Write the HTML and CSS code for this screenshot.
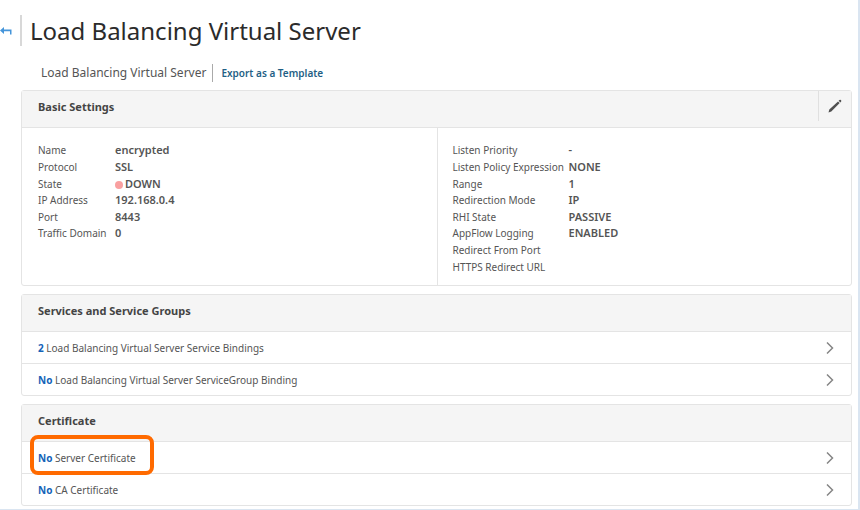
FILE: index.html
```html
<!DOCTYPE html>
<html lang="en">
<head>
<meta charset="utf-8">
<title>Load Balancing Virtual Server</title>
<link rel="stylesheet" href="styles.css">
</head>
<body>
<main class="page">
  <header class="page-header">
    <a class="back" href="#" aria-label="Back">
      <svg width="12" height="8" viewBox="0 0 12 8" aria-hidden="true"><path d="M0 3.500 4 0v2.500h7.500v5h-1.500V4.300H4V7z" fill="#4595da"/></svg>
    </a>
    <h1 class="title">Load Balancing Virtual Server</h1>
  </header>
  <div class="content">
    <nav class="subnav">
      <span class="subnav-name">Load Balancing Virtual Server</span>
      <a class="export" href="#">Export as a Template</a>
    </nav>

    <section class="panel">
      <header class="panel-header">
        <h2 class="panel-title">Basic Settings</h2>
        <button class="edit" type="button" aria-label="Edit">
          <svg width="14" height="14" viewBox="0 0 14 14" aria-hidden="true"><path d="M0.500 13.500 1.300 10.600 10 2.400 11.700 4.100 3.300 12.600zM10.600 1.800 11.500 0.900Q12.200 0.400 12.900 1 13.600 1.700 13.200 2.500L12.300 3.500z" fill="#505050"/></svg>
        </button>
      </header>
      <div class="settings">
        <dl class="details">
          <dt>Name</dt><dd>encrypted</dd>
          <dt>Protocol</dt><dd>SSL</dd>
          <dt>State</dt><dd><span class="dot"></span>DOWN</dd>
          <dt>IP Address</dt><dd>192.168.0.4</dd>
          <dt>Port</dt><dd>8443</dd>
          <dt>Traffic Domain</dt><dd>0</dd>
        </dl>
        <dl class="details details-wide">
          <dt>Listen Priority</dt><dd>-</dd>
          <dt>Listen Policy Expression</dt><dd>NONE</dd>
          <dt>Range</dt><dd>1</dd>
          <dt>Redirection Mode</dt><dd>IP</dd>
          <dt>RHI State</dt><dd>PASSIVE</dd>
          <dt>AppFlow Logging</dt><dd>ENABLED</dd>
          <dt>Redirect From Port</dt><dd></dd>
          <dt>HTTPS Redirect URL</dt><dd></dd>
        </dl>
      </div>
    </section>

    <section class="panel">
      <header class="panel-header"><h2 class="panel-title">Services and Service Groups</h2></header>
      <a class="row" href="#"><span><b>2</b> Load Balancing Virtual Server Service Bindings</span>
        <svg class="chevron" width="8" height="12" viewBox="0 0 8 12" aria-hidden="true"><path d="M1 0.500 6.500 6 1 11.500"/></svg></a>
      <a class="row" href="#"><span><b>No</b> Load Balancing Virtual Server ServiceGroup Binding</span>
        <svg class="chevron" width="8" height="12" viewBox="0 0 8 12" aria-hidden="true"><path d="M1 0.500 6.500 6 1 11.500"/></svg></a>
    </section>

    <section class="panel">
      <header class="panel-header"><h2 class="panel-title">Certificate</h2></header>
      <a class="row highlighted" href="#"><span><b>No</b> Server Certificate</span>
        <svg class="chevron" width="8" height="12" viewBox="0 0 8 12" aria-hidden="true"><path d="M1 0.500 6.500 6 1 11.500"/></svg></a>
      <a class="row" href="#"><span><b>No</b> CA Certificate</span>
        <svg class="chevron" width="8" height="12" viewBox="0 0 8 12" aria-hidden="true"><path d="M1 0.500 6.500 6 1 11.500"/></svg></a>
    </section>
  </div>
</main>
</body>
</html>
```
FILE: styles.css
```css
*, *::before { box-sizing: border-box; }

body {
  margin: 0;
  background: #fff;
  color: #555;
  font: 10px/16px "Noto Sans", "Open Sans", sans-serif;
}

a { color: inherit; text-decoration: none; }

.page {
  padding: 15px 6px 3px 0;
  border-right: 2px solid #dae5f1;
  border-bottom: 1px solid #dae5f1;
}

.page-header { display: flex; align-items: center; }

.back { display: flex; width: 20px; }

.title {
  margin: 0;
  padding: 1px 0 0 8px;
  border-left: 2px solid #d8d8d8;
  color: #2b2b2b;
  font-size: 24px;
  font-weight: 400;
  line-height: 30px;
}

.content { padding-left: 21px; }

.subnav {
  display: flex;
  align-items: center;
  margin: 18px 0 8px;
  padding-left: 20px;
  line-height: 18px;
}

.subnav-name { font-size: 12px; }

.export {
  margin-left: 6px;
  padding-left: 8px;
  border-left: 1px solid #aaa;
  color: #1f5f85;
  font-weight: 600;
}

.panel {
  margin-bottom: 8px;
  border: 1px solid #e4e4e4;
  border-radius: 3px;
}

.panel:last-child { margin-bottom: 0; }

.panel-header {
  display: flex;
  justify-content: space-between;
  height: 36px;
  background: #f5f5f5;
}

.panel-title {
  margin: 0;
  padding: 8px 16px;
  color: #444;
  font-size: 11px;
  font-weight: 700;
}

.edit {
  display: grid;
  place-items: center;
  width: 33px;
  height: 30px;
  padding: 0;
  border: 0;
  border-left: 1px solid #e0e0e0;
  background: none;
}

.settings {
  display: grid;
  grid-template-columns: 1fr 1fr;
  border-top: 1px solid #e4e4e4;
}

.details {
  display: grid;
  grid-template-columns: 77px 1fr;
  grid-template-rows: repeat(8, 1fr);
  align-items: center;
  min-height: 157px;
  margin: 0;
  padding: 14px 16px 10px;
}

.details-wide {
  grid-template-columns: 116px 1fr;
  padding-left: 15px;
  border-left: 1px solid #e4e4e4;
}

.details dd { margin: 0; font-size: 11px; font-weight: 600; }

.dot {
  display: inline-block;
  width: 8px;
  height: 8px;
  margin-right: 2px;
  border-radius: 50%;
  background: #f9a0a0;
  vertical-align: -1px;
}

.row {
  position: relative;
  display: flex;
  align-items: center;
  justify-content: space-between;
  height: 32px;
  padding: 0 17px 0 16px;
  border-top: 1px solid #e4e4e4;
}

.row b { color: #1463b8; }

.chevron { fill: none; stroke: #868686; stroke-width: 1.5; }

.highlighted::before {
  content: "";
  position: absolute;
  top: -7px;
  left: 8px;
  width: 124px;
  height: 40px;
  border: 4px solid #ff6a00;
  border-radius: 8px;
  z-index: 1;
}
```
